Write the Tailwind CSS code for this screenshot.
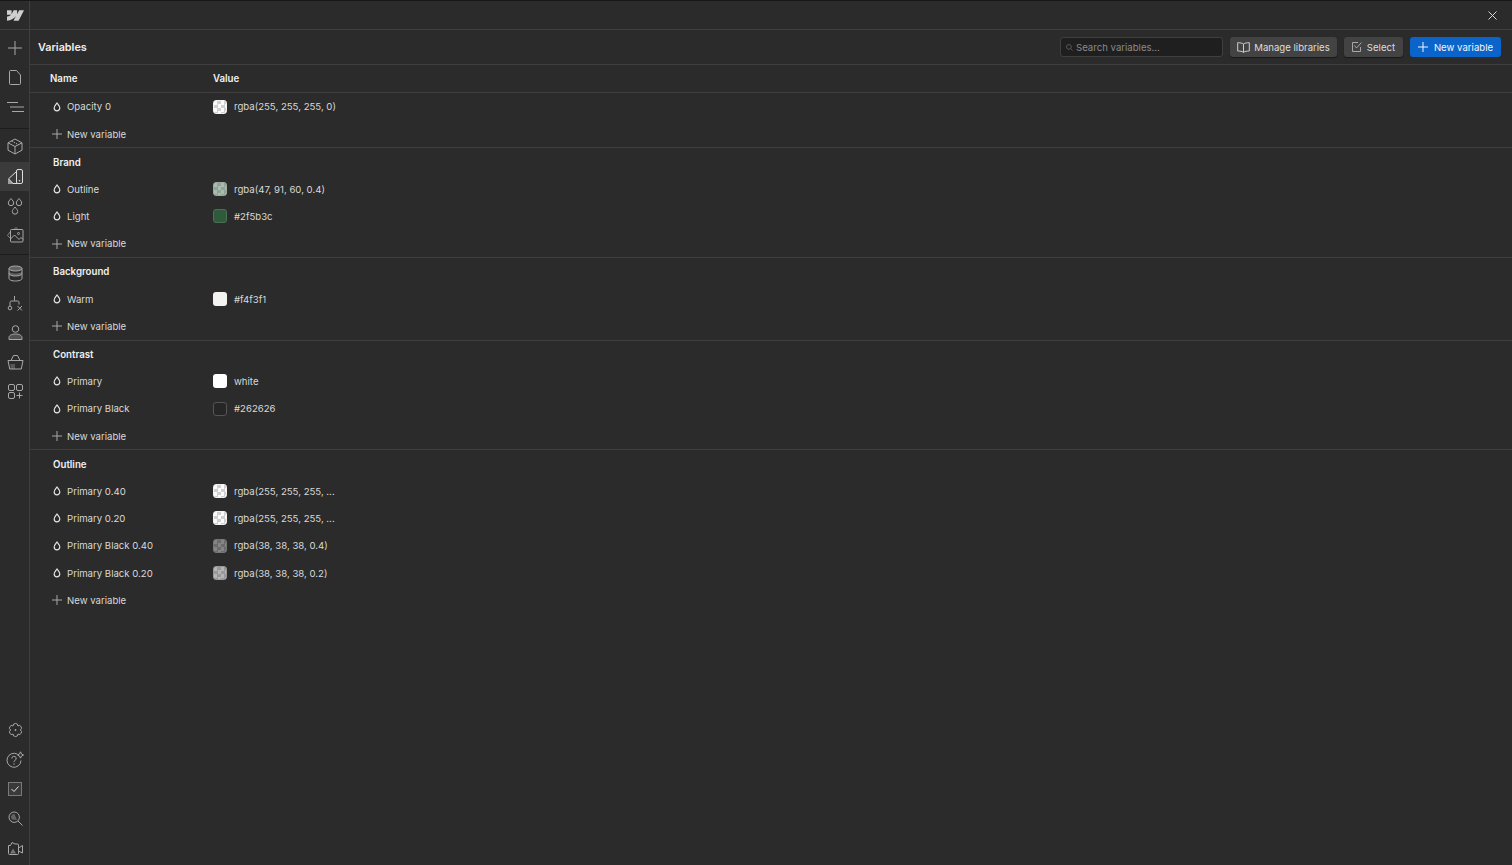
<!DOCTYPE html>
<html><head><meta charset="utf-8"><title>Variables</title>
<script src="https://cdn.jsdelivr.net/npm/@tailwindcss/browser@4"></script></head>
<body class="m-0 bg-[#2b2b2b]">
<div class="flex h-[865px] w-[1512px] overflow-hidden bg-[#2b2b2b] font-['Inter',sans-serif] text-[9.6px] text-[#d9d9d9] border-t border-[#171717] [&_span:not(:empty)]:translate-y-[1px]">
<!-- rail -->
<aside class="flex w-[30px] shrink-0 flex-col border-r border-[#3f3f3f] text-[#a8a8a8] pb-[1px]">
  <div class="flex h-[29px] shrink-0 items-center justify-center border-b border-[#3f3f3f] pl-[1px]">
    <svg width="17" height="11" viewBox="0 0 17 10.500"><path d="M17 0L11.600 10.500H6.500L8.800 6.100H8.700C6.800 8.500 4 10.200 0 10.500V6.200S2.600 6 4.100 4.400H0V0H4.600V3.800L4.700 3.800L6.600 0H10.100V3.800H10.200L12.200 0Z" fill="#cfcfcf"/></svg>
  </div>
  <div class="flex flex-col pt-[3.500px] pb-[5.500px] border-b border-[#1d1d1d]">
    <div class="flex h-[29.500px] items-center justify-center pl-[1px]"><svg width="16" height="16" viewBox="0 0 16 16" fill="none" stroke="currentColor"><path d="M8 1V15M1 8H15"/></svg></div>
    <div class="flex h-[29.500px] items-center justify-center pl-[1px]"><svg width="14" height="17" viewBox="0 0 14 17" fill="none" stroke="currentColor"><path d="M1.500 2.500a1 1 0 0 1 1-1H8.500L12.500 6V14.500a1 1 0 0 1-1 1H2.500a1 1 0 0 1-1-1Z"/></svg></div>
    <div class="flex h-[29.500px] items-center justify-center pl-[1px]"><svg width="17" height="12" viewBox="0 0 17 12" fill="none" stroke="currentColor"><path d="M0 1.500H11M3 6H17M5 10.500H17"/></svg></div>
  </div>
  <div class="flex flex-col pt-[3.500px] pb-[4px] border-b border-[#1d1d1d]">
    <div class="flex h-[29.500px] items-center justify-center pl-[1px]"><svg width="16" height="17" viewBox="0 0 16 17" fill="none" stroke="currentColor"><path d="M8 1L15 4.800V12.200L8 16L1 12.200V4.800Z"/><path d="M1 4.800L8 8.500L15 4.800M8 8.500V16"/><path d="M4.500 3L11.500 6.700" stroke-dasharray="1.500 1"/></svg></div>
    <div class="flex h-[29.500px] items-center justify-center bg-[#3b3b3b] pl-[1px] text-[#dedede]"><svg width="17" height="17" viewBox="0 0 17 17" fill="none" stroke="currentColor"><rect x="9.500" y="1.500" width="6" height="14" rx="1.500"/><path d="M9.500 3.500L1.500 10.800L6 15.500H10"/><path d="M1 10.500L7 16H1Z" fill="currentColor" stroke="none" opacity=".6"/><circle cx="12.500" cy="12.800" r=".8" fill="currentColor" stroke="none"/></svg></div>
    <div class="flex h-[29.500px] items-center justify-center pl-[1px]"><svg width="16" height="18" viewBox="0 0 16 18" fill="none" stroke="currentColor"><path d="M4 1.500C5.500 3.500 6.700 4.500 6.700 6A2.700 2.700 0 0 1 1.300 6C1.300 4.500 2.500 3.500 4 1.500Z"/><path d="M12 1.500C13.500 3.500 14.700 4.500 14.700 6A2.700 2.700 0 0 1 9.300 6C9.300 4.500 10.500 3.500 12 1.500Z"/><path d="M8 10C9.500 12 10.700 13 10.700 14.500A2.700 2.700 0 0 1 5.300 14.500C5.300 13 6.500 12 8 10Z"/></svg></div>
    <div class="flex h-[29.500px] items-center justify-center pl-[1px]"><svg width="17" height="16" viewBox="0 0 17 16" fill="none" stroke="currentColor"><rect x="3.500" y="2.500" width="12.500" height="12.500" rx="1"/><path d="M3.500 12L7.500 8L12 12.500L14 10.500L16 12.500"/><circle cx="11.500" cy="6.500" r="1"/><path d="M3 5L.5 8.500L3 11" opacity=".7"/><path d="M7 2.500L9 .5L11 2.500" opacity=".7"/></svg></div>
  </div>
  <div class="flex flex-1 flex-col pt-[3px]">
    <div class="flex h-[30px] items-center justify-center pl-[1px]"><svg width="15" height="17" viewBox="0 0 15 17" fill="none" stroke="currentColor"><ellipse cx="7.500" cy="3.500" rx="6.500" ry="2.500" fill="currentColor" fill-opacity=".45"/><path d="M1 3.500V13.500C1 15 4 16 7.500 16S14 15 14 13.500V3.500"/><path d="M1 8.500C1 10 4 11 7.500 11S14 10 14 8.500"/><path d="M1 6C1 7.500 4 8.500 7.500 8.500S14 7.500 14 6V8.500C14 10 11 11 7.500 11S1 10 1 8.500Z" fill="currentColor" fill-opacity=".45" stroke="none"/></svg></div>
    <div class="flex h-[30px] items-center justify-center pl-[1px]"><svg width="16" height="15" viewBox="0 0 16 15" fill="none" stroke="currentColor"><path d="M7.500 0V4.500M3 10V6.500a1.500 1.500 0 0 1 1.500-1.500H10.500A1.500 1.500 0 0 1 12 6.500V8.500"/><circle cx="3" cy="12" r="1.800"/><path d="M10.500 10L15 14.500M15 10L10.500 14.500"/></svg></div>
    <div class="flex h-[29.500px] items-center justify-center pl-[1px]"><svg width="15" height="15" viewBox="0 0 15 15" fill="none" stroke="currentColor"><circle cx="7.500" cy="4" r="3.300"/><path d="M1 14.500V12.500C1 10.500 3.500 9 7.500 9S14 10.500 14 12.500V14.500Z" fill="currentColor" fill-opacity=".3"/></svg></div>
    <div class="flex h-[29.500px] items-center justify-center pl-[1px]"><svg width="17" height="15" viewBox="0 0 17 15" fill="none" stroke="currentColor"><path d="M1 5.500H16L14.300 14H2.700Z"/><path d="M4 5.500L6.500 .5H10.500L13 5.500"/><path d="M3.500 9H8V14H3.500Z" fill="currentColor" fill-opacity=".35" stroke="none"/></svg></div>
    <div class="flex h-[29.500px] items-center justify-center pl-[1px]"><svg width="15" height="15" viewBox="0 0 15 15" fill="none" stroke="currentColor"><rect x=".5" y=".5" width="6" height="6" rx="1.500"/><rect x="8.500" y=".5" width="6" height="6" rx="1.500"/><rect x=".5" y="8.500" width="6" height="6" rx="1.500"/><path d="M11.500 8.500V14.500M8.500 11.500H14.500"/></svg></div>
  </div>
  <div class="flex flex-col">
    <div class="flex h-[29.500px] items-center justify-center pl-[1px]"><svg width="15" height="16" viewBox="0 0 15 16" fill="none" stroke="currentColor"><path d="M12.300 8A2.400 2.400 0 0 1 9.900 12.160A2.400 2.400 0 0 1 5.100 12.160A2.400 2.400 0 0 1 2.700 8A2.400 2.400 0 0 1 5.100 3.840A2.400 2.400 0 0 1 9.900 3.840A2.400 2.400 0 0 1 12.300 8Z"/><circle cx="7.500" cy="8" r=".9" fill="currentColor" stroke="none"/></svg></div>
    <div class="flex h-[29.500px] items-center justify-center pl-[1px]"><svg width="18" height="18" viewBox="0 0 18 18" fill="none" stroke="currentColor"><path d="M11.500 3.200A7 7 0 1 0 15 9.500"/><path d="M5.800 7.500A2.200 2.200 0 1 1 8.800 9.500C8.200 9.800 8 10.300 8 11"/><circle cx="8" cy="13" r=".7" fill="currentColor" stroke="none"/><path d="M14.500 .8L15.500 3L17.500 4L15.500 5L14.500 7.200L13.500 5L11.500 4L13.500 3Z"/></svg></div>
    <div class="flex h-[29.500px] items-center justify-center pl-[1px]"><svg width="14" height="14" viewBox="0 0 14 14" fill="none"><rect x=".5" y=".5" width="13" height="13" fill="#3a3a3a" stroke="#7a7a7a"/><path d="M3.500 7L6 9.500L10.500 4.500" stroke="#dedede"/></svg></div>
    <div class="flex h-[29.500px] items-center justify-center pl-[1px]"><svg width="15" height="15" viewBox="0 0 15 15" fill="none" stroke="currentColor"><circle cx="6.200" cy="6.200" r="5.200"/><path d="M10 10L14.500 14.500"/><path d="M3 6.500A3.200 3.200 0 0 1 6.500 3L9 9L3.800 8.500Z" fill="currentColor" fill-opacity=".45" stroke="none"/></svg></div>
    <div class="flex h-[30.500px] items-center justify-center pl-[1px]"><svg width="16" height="15" viewBox="0 0 16 15" fill="none" stroke="currentColor"><path d="M1.500 4.500H3.500L5 1.500L8 3H10.500a1 1 0 0 1 1 1V12.500a1 1 0 0 1-1 1H2.500a1 1 0 0 1-1-1Z"/><path d="M11.500 7L15.500 4.500V12L11.500 10"/><path d="M3 12.500L6 7.500L9 12.500Z" fill="currentColor" fill-opacity=".6" stroke="none"/></svg></div>
  </div>
</aside>
<!-- main -->
<main class="flex min-w-0 flex-1 flex-col">
  <div class="flex h-[29px] shrink-0 items-center justify-end border-b border-[#3f3f3f] pr-[15px]">
    <svg width="9" height="9" viewBox="0 0 9 9" fill="none" stroke="#d4d4d4"><path d="M.5 .5L8.500 8.500M8.500 .5L.5 8.500"/></svg>
  </div>
  <div class="flex h-[35px] shrink-0 items-center justify-between border-b border-[#3f3f3f] pl-[8px] pr-[11px]">
    <h1 class="translate-y-[1px] text-[10.800px] font-semibold text-[#efefef]">Variables</h1>
    <div class="flex items-center">
      <div class="mr-[7px] flex h-[20px] w-[163px] items-center gap-[3px] rounded-[3px] border border-[#3f3f3f] bg-[#1f1f1f] px-[5px] text-[#8a8a8a]">
        <svg width="7" height="7" viewBox="0 0 8 8" fill="none" stroke="#5f5f5f"><circle cx="3.300" cy="3.300" r="2.700"/><path d="M5.300 5.300L7.500 7.500"/></svg>
        <span>Search variables...</span>
      </div>
      <div class="mr-[7px] flex h-[20px] w-[107px] items-center justify-center gap-[4px] rounded-[3px] bg-[#434343] text-[#dedede] shadow-[0_1px_1px_#1a1a1a]">
        <svg width="13" height="11" viewBox="0 0 13 11" fill="none" stroke="#cfcfcf"><path d="M6.500 2C5 1 3 .7 .7 .7V9C3 9 5 9.300 6.500 10.300C8 9.300 10 9 12.300 9V.7C10 .7 8 1 6.500 2V10.300"/></svg>
        <span>Manage libraries</span>
      </div>
      <div class="mr-[7px] flex h-[20px] w-[59px] items-center justify-center gap-[4px] rounded-[3px] bg-[#434343] text-[#dedede] shadow-[0_1px_1px_#1a1a1a]">
        <svg width="11" height="10" viewBox="0 0 11 10" fill="none" stroke="#a8a8a8"><path d="M8.500 5V9.500H.5V.5H6"/><path d="M2.500 3.500L4.500 6L9.500 .5"/></svg>
        <span>Select</span>
      </div>
      <div class="flex h-[20px] w-[91px] items-center justify-center gap-[6px] rounded-[3px] bg-[#0a64c9] text-[#f2f6fb]">
        <svg width="10" height="10" viewBox="0 0 10 10" fill="none" stroke="#f2f6fb"><path d="M5 0V10M0 5H10"/></svg>
        <span>New variable</span>
      </div>
    </div>
  </div>
  <div class="flex h-[28px] shrink-0 items-center border-b border-[#3f3f3f] text-[9.700px] font-semibold text-[#efefef]">
    <div class="w-[183px] translate-y-[1px] pl-[20px]">Name</div><div class="translate-y-[1px]">Value</div>
  </div>

  <section class="border-b border-[#3f3f3f]">
    <div class="flex h-[27.200px] items-center"><div class="flex w-[183px] items-center gap-[6px] pl-[23px]"><svg width="8" height="10" viewBox="0 0 8 10" fill="none" stroke="#e6e6e6" stroke-width="1.200"><path d="M4 1C5.300 2.800 6.800 4.200 6.800 6A2.800 2.800 0 0 1 1.200 6C1.200 4.200 2.700 2.800 4 1Z"/></svg><span>Opacity 0</span></div><div class="flex items-center gap-[7px]"><span class="size-[14px] rounded-[3px] border border-[#f2f2f2] bg-[repeating-conic-gradient(#d0d0d0_0_25%,#fbfbfb_0_50%)] bg-[length:7px_7px]"></span><span>rgba(255, 255, 255, 0)</span></div></div>
    <div class="flex h-[27.200px] items-center gap-[5px] pl-[22px]"><svg width="10" height="10" viewBox="0 0 10 10" fill="none" stroke="#a8a8a8"><path d="M5 0V10M0 5H10"/></svg><span>New variable</span></div>
  </section>

  <section class="border-b border-[#3f3f3f]">
    <div class="flex h-[27.200px] translate-y-[1px] items-center pl-[23px] text-[9.700px] font-semibold text-[#efefef]">Brand</div>
    <div class="flex h-[27.200px] items-center"><div class="flex w-[183px] items-center gap-[6px] pl-[23px]"><svg width="8" height="10" viewBox="0 0 8 10" fill="none" stroke="#e6e6e6" stroke-width="1.200"><path d="M4 1C5.300 2.800 6.800 4.200 6.800 6A2.800 2.800 0 0 1 1.200 6C1.200 4.200 2.700 2.800 4 1Z"/></svg><span>Outline</span></div><div class="flex items-center gap-[7px]"><span class="size-[14px] rounded-[3px] border border-[#a0a8a2] bg-[repeating-conic-gradient(#8ea596_0_25%,#a9bcaf_0_50%)] bg-[length:7px_7px]"></span><span>rgba(47, 91, 60, 0.4)</span></div></div>
    <div class="flex h-[27.200px] items-center"><div class="flex w-[183px] items-center gap-[6px] pl-[23px]"><svg width="8" height="10" viewBox="0 0 8 10" fill="none" stroke="#e6e6e6" stroke-width="1.200"><path d="M4 1C5.300 2.800 6.800 4.200 6.800 6A2.800 2.800 0 0 1 1.200 6C1.200 4.200 2.700 2.800 4 1Z"/></svg><span>Light</span></div><div class="flex items-center gap-[7px]"><span class="size-[14px] rounded-[3px] border border-[#4d6f57] bg-[#2f5b3c]"></span><span>#2f5b3c</span></div></div>
    <div class="flex h-[27.200px] items-center gap-[5px] pl-[22px]"><svg width="10" height="10" viewBox="0 0 10 10" fill="none" stroke="#a8a8a8"><path d="M5 0V10M0 5H10"/></svg><span>New variable</span></div>
  </section>

  <section class="border-b border-[#3f3f3f]">
    <div class="flex h-[27.200px] translate-y-[1px] items-center pl-[23px] text-[9.700px] font-semibold text-[#efefef]">Background</div>
    <div class="flex h-[27.200px] items-center"><div class="flex w-[183px] items-center gap-[6px] pl-[23px]"><svg width="8" height="10" viewBox="0 0 8 10" fill="none" stroke="#e6e6e6" stroke-width="1.200"><path d="M4 1C5.300 2.800 6.800 4.200 6.800 6A2.800 2.800 0 0 1 1.200 6C1.200 4.200 2.700 2.800 4 1Z"/></svg><span>Warm</span></div><div class="flex items-center gap-[7px]"><span class="size-[14px] rounded-[3px] bg-[#f4f3f1]"></span><span>#f4f3f1</span></div></div>
    <div class="flex h-[27.200px] items-center gap-[5px] pl-[22px]"><svg width="10" height="10" viewBox="0 0 10 10" fill="none" stroke="#a8a8a8"><path d="M5 0V10M0 5H10"/></svg><span>New variable</span></div>
  </section>

  <section class="border-b border-[#3f3f3f]">
    <div class="flex h-[27.200px] translate-y-[1px] items-center pl-[23px] text-[9.700px] font-semibold text-[#efefef]">Contrast</div>
    <div class="flex h-[27.200px] items-center"><div class="flex w-[183px] items-center gap-[6px] pl-[23px]"><svg width="8" height="10" viewBox="0 0 8 10" fill="none" stroke="#e6e6e6" stroke-width="1.200"><path d="M4 1C5.300 2.800 6.800 4.200 6.800 6A2.800 2.800 0 0 1 1.200 6C1.200 4.200 2.700 2.800 4 1Z"/></svg><span>Primary</span></div><div class="flex items-center gap-[7px]"><span class="size-[14px] rounded-[3px] bg-white"></span><span>white</span></div></div>
    <div class="flex h-[27.200px] items-center"><div class="flex w-[183px] items-center gap-[6px] pl-[23px]"><svg width="8" height="10" viewBox="0 0 8 10" fill="none" stroke="#e6e6e6" stroke-width="1.200"><path d="M4 1C5.300 2.800 6.800 4.200 6.800 6A2.800 2.800 0 0 1 1.200 6C1.200 4.200 2.700 2.800 4 1Z"/></svg><span>Primary Black</span></div><div class="flex items-center gap-[7px]"><span class="size-[14px] rounded-[3px] border border-[#555555] bg-[#262626]"></span><span>#262626</span></div></div>
    <div class="flex h-[27.200px] items-center gap-[5px] pl-[22px]"><svg width="10" height="10" viewBox="0 0 10 10" fill="none" stroke="#a8a8a8"><path d="M5 0V10M0 5H10"/></svg><span>New variable</span></div>
  </section>

  <section>
    <div class="flex h-[27.200px] translate-y-[1px] items-center pl-[23px] text-[9.700px] font-semibold text-[#efefef]">Outline</div>
    <div class="flex h-[27.200px] items-center"><div class="flex w-[183px] items-center gap-[6px] pl-[23px]"><svg width="8" height="10" viewBox="0 0 8 10" fill="none" stroke="#e6e6e6" stroke-width="1.200"><path d="M4 1C5.300 2.800 6.800 4.200 6.800 6A2.800 2.800 0 0 1 1.200 6C1.200 4.200 2.700 2.800 4 1Z"/></svg><span>Primary 0.40</span></div><div class="flex items-center gap-[7px]"><span class="size-[14px] rounded-[3px] border border-[#f2f2f2] bg-[repeating-conic-gradient(#d0d0d0_0_25%,#fbfbfb_0_50%)] bg-[length:7px_7px]"></span><span>rgba(255, 255, 255, ...</span></div></div>
    <div class="flex h-[27.200px] items-center"><div class="flex w-[183px] items-center gap-[6px] pl-[23px]"><svg width="8" height="10" viewBox="0 0 8 10" fill="none" stroke="#e6e6e6" stroke-width="1.200"><path d="M4 1C5.300 2.800 6.800 4.200 6.800 6A2.800 2.800 0 0 1 1.200 6C1.200 4.200 2.700 2.800 4 1Z"/></svg><span>Primary 0.20</span></div><div class="flex items-center gap-[7px]"><span class="size-[14px] rounded-[3px] border border-[#f2f2f2] bg-[repeating-conic-gradient(#d0d0d0_0_25%,#fbfbfb_0_50%)] bg-[length:7px_7px]"></span><span>rgba(255, 255, 255, ...</span></div></div>
    <div class="flex h-[27.200px] items-center"><div class="flex w-[183px] items-center gap-[6px] pl-[23px]"><svg width="8" height="10" viewBox="0 0 8 10" fill="none" stroke="#e6e6e6" stroke-width="1.200"><path d="M4 1C5.300 2.800 6.800 4.200 6.800 6A2.800 2.800 0 0 1 1.200 6C1.200 4.200 2.700 2.800 4 1Z"/></svg><span>Primary Black 0.40</span></div><div class="flex items-center gap-[7px]"><span class="size-[14px] rounded-[3px] border border-[#777777] bg-[repeating-conic-gradient(#6b6b6b_0_25%,#858585_0_50%)] bg-[length:7px_7px]"></span><span>rgba(38, 38, 38, 0.4)</span></div></div>
    <div class="flex h-[27.200px] items-center"><div class="flex w-[183px] items-center gap-[6px] pl-[23px]"><svg width="8" height="10" viewBox="0 0 8 10" fill="none" stroke="#e6e6e6" stroke-width="1.200"><path d="M4 1C5.300 2.800 6.800 4.200 6.800 6A2.800 2.800 0 0 1 1.200 6C1.200 4.200 2.700 2.800 4 1Z"/></svg><span>Primary Black 0.20</span></div><div class="flex items-center gap-[7px]"><span class="size-[14px] rounded-[3px] border border-[#999999] bg-[repeating-conic-gradient(#989898_0_25%,#b5b5b5_0_50%)] bg-[length:7px_7px]"></span><span>rgba(38, 38, 38, 0.2)</span></div></div>
    <div class="flex h-[27.200px] items-center gap-[5px] pl-[22px]"><svg width="10" height="10" viewBox="0 0 10 10" fill="none" stroke="#a8a8a8"><path d="M5 0V10M0 5H10"/></svg><span>New variable</span></div>
  </section>
</main>
</div>
</body></html>
